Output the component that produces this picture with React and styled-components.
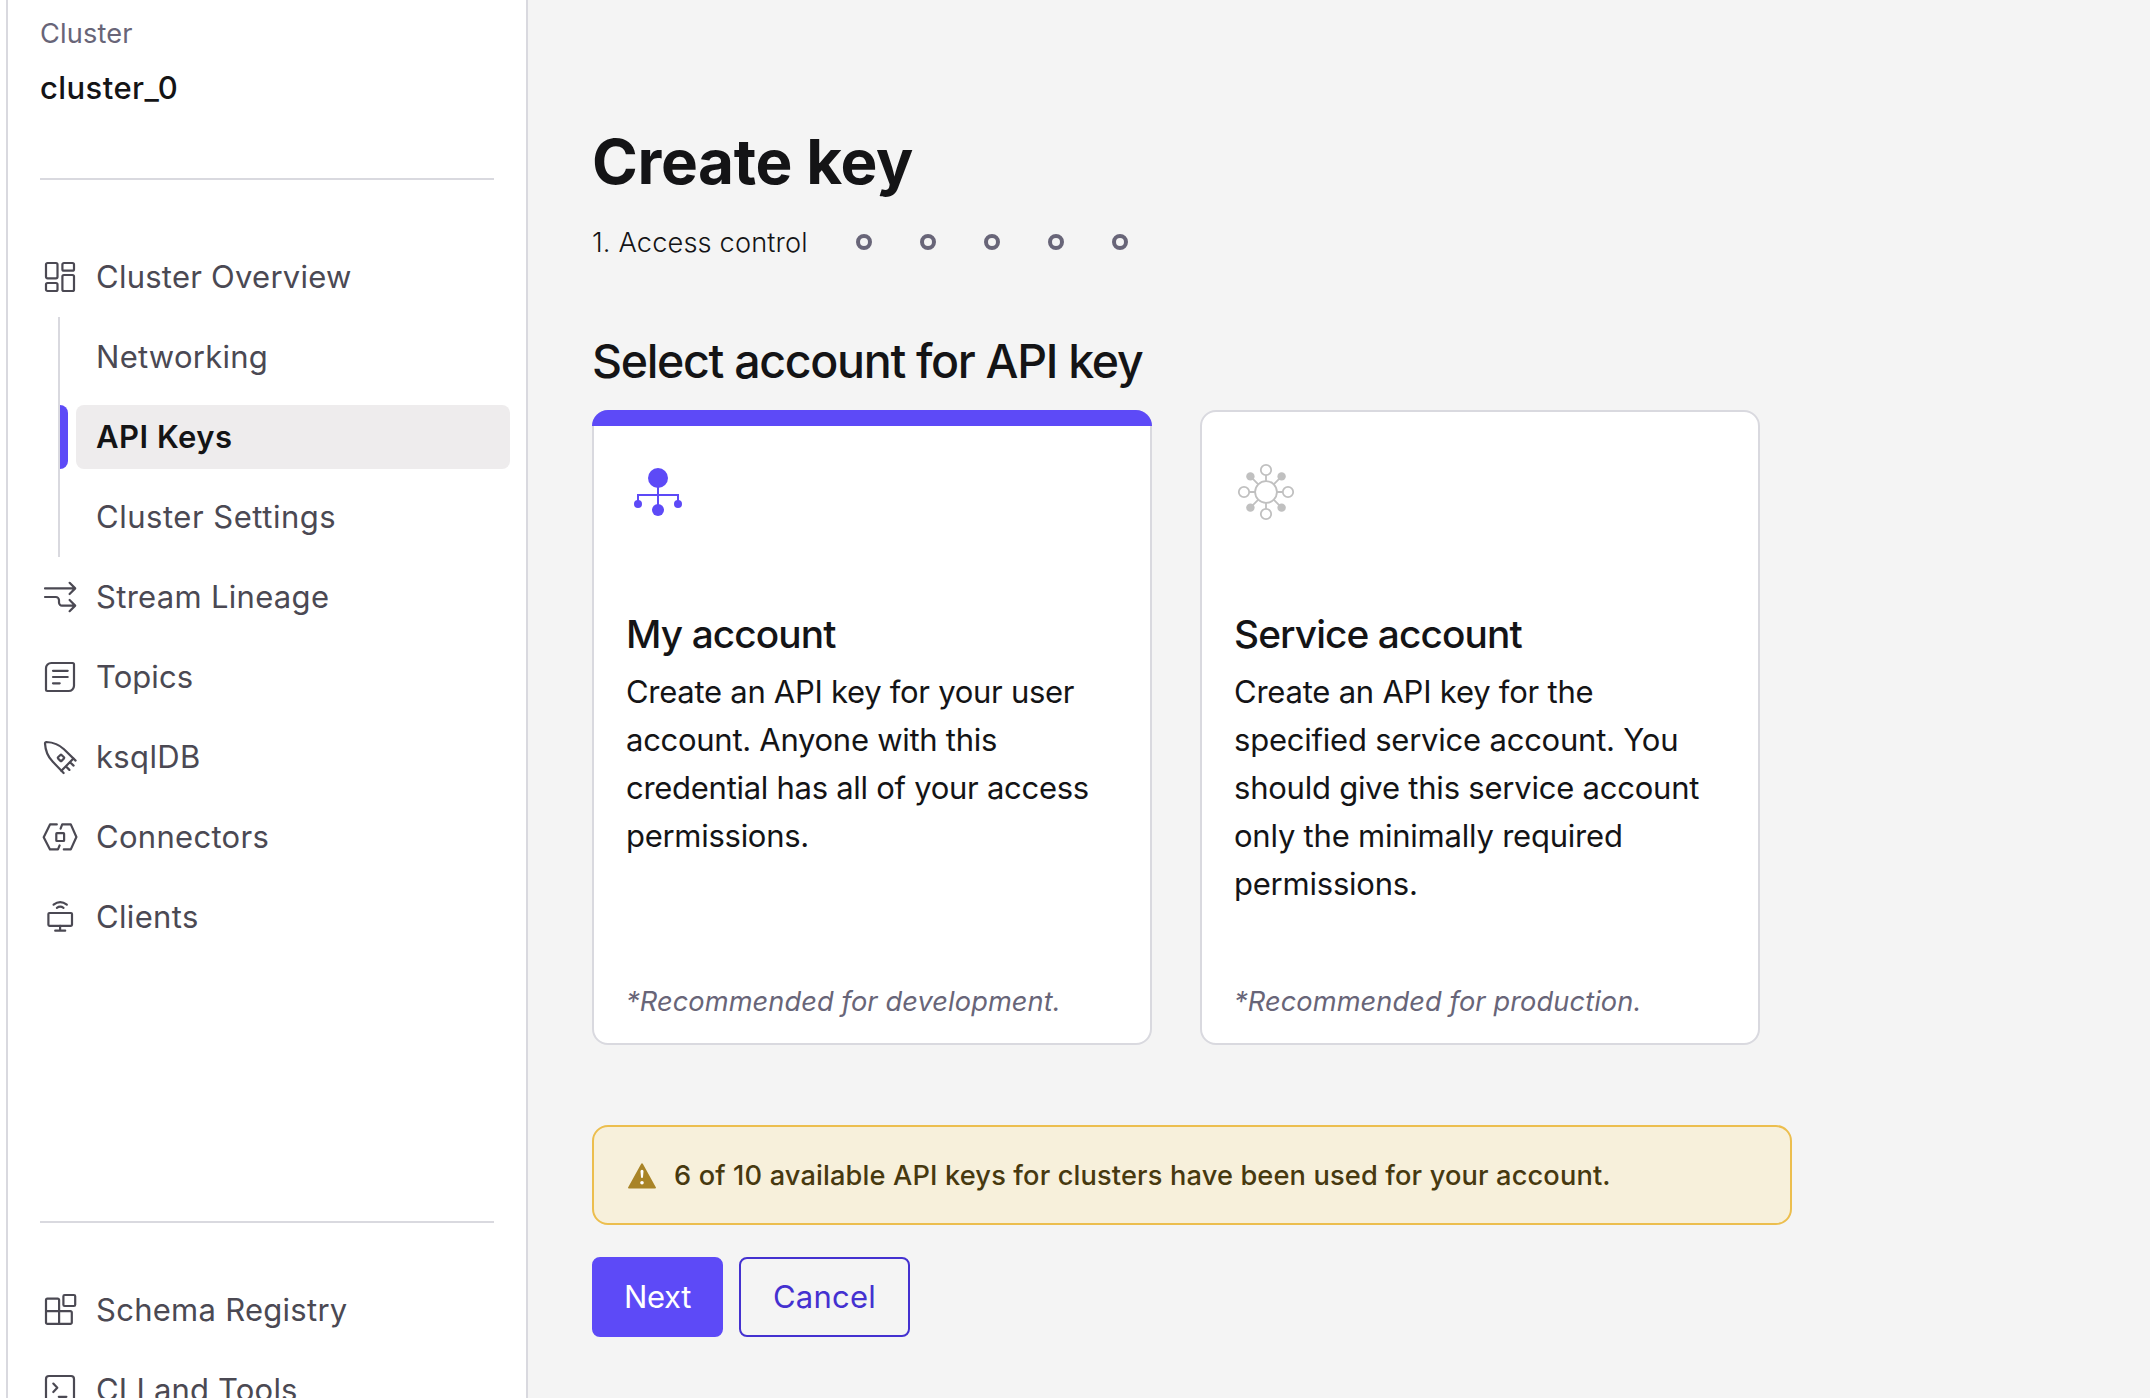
import React from "react";
import styled, { createGlobalStyle, css } from "styled-components";

const color = {
  ink: "#141416",
  nav: "#4b4953",
  muted: "#686578",
  line: "#d9d9df",
  canvas: "#f4f4f4",
  primary: "#5d4af7",
  primaryDark: "#4431d0",
};

const GlobalStyle = createGlobalStyle`
  *, *::before, *::after { box-sizing: border-box; }
  html, body { margin: 0; background: #fff; }
  body {
    font-family: Inter, "Liberation Sans", sans-serif;
    color: ${color.ink};
    overflow: hidden;
  }
  h1, h2, h3, p, ul { margin: 0; padding: 0; }
`;

const Page = styled.div`
  display: flex;
  height: 1398px;
  padding-left: 6px;
  overflow: hidden;
  background: #fff;
`;

/* Sidebar */

const Sidebar = styled.aside`
  flex: none;
  display: flex;
  flex-direction: column;
  width: 522px;
  border: solid ${color.line};
  border-width: 0 2px;
`;

const ClusterHeader = styled.header`
  flex: none;
  display: flex;
  flex-direction: column;
  height: 178px;
  margin: 0 32px;
  padding-top: 17px;
`;

const ClusterLabel = styled.span`
  font-size: 27.2px;
  line-height: 33px;
  letter-spacing: 0.15px;
  color: ${color.muted};
`;

const ClusterName = styled.span`
  margin-top: 18px;
  font-size: 31px;
  line-height: 40px;
  font-weight: 500;
  letter-spacing: 0.42px;
`;

const Divider = styled.hr`
  flex: none;
  width: 454px;
  height: 2px;
  margin: 0 0 0 32px;
  border: 0;
  background: ${color.line};
`;

const NavList = styled.nav`
  flex: none;
  display: flex;
  flex-direction: column;
  margin-top: ${(p) => p.$offset}px;
`;

const NavItem = styled.a`
  flex: none;
  display: flex;
  align-items: center;
  height: 80px;
  padding-left: 36px;
  font-size: 31px;
  line-height: 40px;
  letter-spacing: ${(p) => p.$tracking ?? 0.27}px;
  color: ${color.nav};
  white-space: nowrap;
`;

const NavIcon = styled.svg`
  flex: none;
  width: 32px;
  height: 32px;
  margin-right: 20px;
  overflow: visible;
  fill: none;
  stroke: currentColor;
  stroke-width: 2.2;
  stroke-linecap: round;
  stroke-linejoin: round;
`;

const SubNav = styled.div`
  display: flex;
  flex-direction: column;
  gap: 16px;
  height: 240px;
  margin-left: 50px;
  padding: 8px 0;
  border-left: 2px solid ${color.line};
`;

const SubNavItem = styled.a`
  display: flex;
  height: 64px;
  font-size: 31px;
  line-height: 64px;
  letter-spacing: ${(p) => p.$tracking ?? 0.27}px;
  color: ${color.nav};
  ${(p) =>
    p.$active &&
    css`
      color: ${color.ink};
      font-weight: 600;
    `}
`;

const ActiveBar = styled.span`
  width: 8px;
  border-radius: 0 8px 8px 0;
  background: ${(p) => (p.$active ? color.primary : "transparent")};
`;

const SubNavLabel = styled.span`
  width: 434px;
  margin-left: 8px;
  padding-left: 20px;
  border-radius: 8px;
  background: ${(p) => (p.$active ? "#eeeced" : "transparent")};
`;

/* Main */

const Main = styled.main`
  flex: 1;
  display: flex;
  flex-direction: column;
  padding: 122px 0 0 64px;
  background: ${color.canvas};
`;

const Title = styled.h1`
  font-size: 62px;
  line-height: 79px;
  font-weight: 700;
  letter-spacing: -0.36px;
`;

const Stepper = styled.div`
  display: flex;
  gap: 48px;
  height: 32px;
  margin-top: 25px;
`;

const StepLabel = styled.span`
  width: 216px;
  font-size: 27.2px;
  line-height: 33px;
  font-weight: 300;
  letter-spacing: 0.15px;
  white-space: nowrap;
`;

const StepDot = styled.span`
  width: 16px;
  height: 16px;
  margin-top: 8px;
  border: 4px solid ${color.muted};
  border-radius: 50%;
`;

const SectionTitle = styled.h2`
  margin-top: 73px;
  font-size: 46.5px;
  line-height: 60px;
  font-weight: 500;
  letter-spacing: -1.32px;
`;

const Cards = styled.div`
  display: flex;
  gap: 48px;
  margin-top: 19px;
`;

const Card = styled.section`
  position: relative;
  display: flex;
  flex-direction: column;
  width: 560px;
  height: 635px;
  padding: 48px 32px 25px;
  border: 2px solid ${color.line};
  border-radius: 16px;
  background: #fff;
  ${(p) =>
    p.$selected &&
    css`
      &::before {
        content: "";
        position: absolute;
        inset: -2px -2px auto;
        height: 16px;
        border-radius: 16px 16px 0 0;
        background: ${color.primary};
      }
    `}
`;

const CardIcon = styled.svg`
  display: block;
  width: 64px;
  height: 64px;
`;

const CardTitle = styled.h3`
  margin-top: 86px;
  font-size: 38.8px;
  line-height: 48px;
  font-weight: 500;
  letter-spacing: -0.9px;
`;

const CardText = styled.p`
  margin-top: 10px;
  font-size: 31px;
  line-height: 48px;
  letter-spacing: ${(p) => p.$tracking}px;
`;

const CardNote = styled.p`
  margin-top: auto;
  font-size: 27.2px;
  line-height: 32px;
  font-style: italic;
  letter-spacing: 0.1px;
  color: ${color.muted};
`;

const Alert = styled.div`
  display: flex;
  align-items: center;
  gap: 18px;
  width: 1200px;
  height: 100px;
  margin-top: 80px;
  padding: 1px 0 0 34px;
  border: 2px solid #ecbe4e;
  border-radius: 16px;
  background: #f7f0db;
  color: #47390f;
  font-size: 27.2px;
  line-height: 33px;
  font-weight: 500;
  letter-spacing: 0.15px;
  white-space: nowrap;
`;

const Actions = styled.div`
  display: flex;
  gap: 16px;
  margin-top: 32px;
`;

const Button = styled.button`
  width: ${(p) => p.$width}px;
  height: 80px;
  padding: 0;
  border: 2px solid ${(p) => (p.$primary ? color.primary : color.primaryDark)};
  border-radius: 8px;
  background: ${(p) => (p.$primary ? color.primary : "transparent")};
  color: ${(p) => (p.$primary ? "#fff" : color.primaryDark)};
  font: 400 31px/40px Inter, "Liberation Sans", sans-serif;
  letter-spacing: ${(p) => (p.$primary ? -0.4 : 0.25)}px;
`;

const OverviewIcon = () => (
  <NavIcon viewBox="0 0 32 32">
    <rect x="2" y="2" width="11.5" height="15.3" rx="1.5" />
    <rect x="18.4" y="2" width="11.6" height="7.7" rx="1.5" />
    <rect x="2" y="22" width="11.5" height="8" rx="1.5" />
    <rect x="18.4" y="14" width="11.6" height="16" rx="1.5" />
  </NavIcon>
);

const LineageIcon = () => (
  <NavIcon viewBox="0 0 32 32">
    <path d="M1 7.4H31M25.6 1.8 31.2 7.4 25.6 13" />
    <path d="M1 16H11.8a3.2 3.2 0 0 1 3.2 3.2v2.4a3 3 0 0 0 3 3H31M25.6 19 31.2 24.6 25.6 30.2" />
  </NavIcon>
);

const TopicsIcon = () => (
  <NavIcon viewBox="0 0 32 32">
    <path d="M7.3 2H28.6A1.4 1.4 0 0 1 30 3.4V24.7A5.3 5.3 0 0 1 24.7 30H3.4A1.4 1.4 0 0 1 2 28.6V7.3A5.3 5.3 0 0 1 7.3 2Z" />
    <path d="M9 9.8H23.7M9 16H23.7M9 22.3H15.7" />
  </NavIcon>
);

const KsqlIcon = () => (
  <NavIcon viewBox="0 0 32 32">
    <path d="M31.6 19.6 20 8.3C15 3.4 9.5 1.3 2.4 1 1.5 1 1 1.4 1 2.4 1.4 10 3.8 15.6 8.6 20.6L19.6 32" />
    <path d="M29.4 17.6 17.4 29.8M26 21.2 29.6 24.6M21.8 25.3 25.4 28.9" />
    <rect x="14.5" y="14.4" width="5" height="5" rx="0.8" transform="rotate(45 17 16.9)" />
  </NavIcon>
);

const ConnectorsIcon = () => (
  <NavIcon viewBox="0 0 32 32">
    <path d="M12.8 3.4H6L-.3 16.2 6 28.4H14L15.6 24.4" />
    <path d="M16.6 7.6 18.2 3.4H26.8L32.4 16 26.8 28.4H19.8" />
    <rect x="12.3" y="12.2" width="7.8" height="7.8" rx="0.6" />
  </NavIcon>
);

const ClientsIcon = () => (
  <NavIcon viewBox="0 0 32 32">
    <rect x="4.4" y="12" width="23.6" height="12.8" rx="1" />
    <path d="M16.1 24.8V29.6M11.2 29.7H21.2" />
    <path d="M9.6 3.7Q16.2-1.5 22.8 3.7M12.9 6.8Q16.2 4.4 19.5 6.8" />
  </NavIcon>
);

const SchemaIcon = () => (
  <NavIcon viewBox="0 0 32 32">
    <path d="M15.1 17.2V6A1.4 1.4 0 0 0 13.7 4.6H3.4A1.4 1.4 0 0 0 2 6V28.4A1.4 1.4 0 0 0 3.4 29.8H26.4A1.4 1.4 0 0 0 27.8 28.4V18.6A1.4 1.4 0 0 0 26.4 17.2H2M15.1 17.2V29.8" />
    <rect x="19.4" y="1" width="11.8" height="11" rx="1.3" />
  </NavIcon>
);

const TerminalIcon = () => (
  <NavIcon viewBox="0 0 32 32">
    <rect x="2" y="2" width="28" height="28" rx="3" />
    <path d="M9.3 9.6 13.3 13.8 9.3 18M14.8 22.8H22.4" />
  </NavIcon>
);

const UserAccountIcon = () => (
  <CardIcon viewBox="0 0 64 64" fill={color.primary}>
    <circle cx="32" cy="18" r="10" />
    <path d="M32 26V46M12 42V35H52V42" fill="none" stroke={color.primary} strokeWidth="2" />
    <circle cx="12" cy="44" r="4" />
    <circle cx="52" cy="44" r="4" />
    <circle cx="32" cy="50" r="6" />
  </CardIcon>
);

const ServiceAccountIcon = () => (
  <CardIcon viewBox="0 0 64 64" fill="none" stroke="#c0c0c0" strokeWidth="1.8">
    <circle cx="32" cy="32" r="10.9" />
    <circle cx="32" cy="10" r="5.2" />
    <circle cx="32" cy="54" r="5.2" />
    <circle cx="10" cy="32" r="5.2" />
    <circle cx="54" cy="32" r="5.2" />
    <path d="M32 15.2V21.1M32 42.9V48.8M15.2 32H21.1M42.9 32H48.8M16.4 16.4 24.3 24.3M47.6 16.4 39.7 24.3M16.4 47.6 24.3 39.7M47.6 47.6 39.7 39.7" />
    <g fill="#c0c0c0" stroke="none">
      <circle cx="16.4" cy="16.4" r="4.2" />
      <circle cx="47.6" cy="16.4" r="4.2" />
      <circle cx="16.4" cy="47.6" r="4.2" />
      <circle cx="47.6" cy="47.6" r="4.2" />
    </g>
  </CardIcon>
);

const WarningIcon = () => (
  <svg width="28" height="26" viewBox="0 0 28 26">
    <path d="M13.2.8a.9.9 0 0 1 1.6 0L27.8 24.2a.9.9 0 0 1-.8 1.3H1a.9.9 0 0 1-.8-1.3Z" fill="#a98427" />
    <path d="M12.5 8.2a1.5 1.5 0 0 1 3 0L15 14a1 1 0 0 1-2 0Z" fill="#fff" />
    <circle cx="14" cy="19.8" r="1.8" fill="#fff" />
  </svg>
);

const resources = [
  { label: "Stream Lineage", Icon: LineageIcon, tracking: 0.3 },
  { label: "Topics", Icon: TopicsIcon, tracking: 0.06 },
  { label: "ksqlDB", Icon: KsqlIcon, tracking: 0.35 },
  { label: "Connectors", Icon: ConnectorsIcon, tracking: 0.3 },
  { label: "Clients", Icon: ClientsIcon, tracking: 0.34 },
];

const subPages = [
  { label: "Networking" },
  { label: "API Keys", active: true, tracking: 0.5 },
  { label: "Cluster Settings", tracking: 0.52 },
];

const tools = [
  { label: "Schema Registry", Icon: SchemaIcon },
  { label: "CLI and Tools", Icon: TerminalIcon, tracking: 0.18 },
];

const NavEntry = ({ label, Icon, tracking }) => (
  <NavItem $tracking={tracking}>
    <Icon />
    {label}
  </NavItem>
);

export default function App() {
  return (
    <>
      <GlobalStyle />
      <Page>
        <Sidebar>
          <ClusterHeader>
            <ClusterLabel>Cluster</ClusterLabel>
            <ClusterName>cluster_0</ClusterName>
          </ClusterHeader>
          <Divider />
          <NavList $offset={57}>
            <NavEntry label="Cluster Overview" Icon={OverviewIcon} tracking={0.24} />
            <SubNav>
              {subPages.map(({ label, active, tracking }) => (
                <SubNavItem key={label} $active={active} $tracking={tracking}>
                  <ActiveBar $active={active} />
                  <SubNavLabel $active={active}>{label}</SubNavLabel>
                </SubNavItem>
              ))}
            </SubNav>
            {resources.map((item) => (
              <NavEntry key={item.label} {...item} />
            ))}
          </NavList>
          <NavList $offset={264}>
            <Divider />
          </NavList>
          <NavList $offset={47}>
            {tools.map((item) => (
              <NavEntry key={item.label} {...item} />
            ))}
          </NavList>
        </Sidebar>
        <Main>
          <Title>Create key</Title>
          <Stepper>
            <StepLabel>1. Access control</StepLabel>
            {[2, 3, 4, 5, 6].map((step) => (
              <StepDot key={step} />
            ))}
          </Stepper>
          <SectionTitle>Select account for API key</SectionTitle>
          <Cards>
            <Card $selected>
              <UserAccountIcon />
              <CardTitle>My account</CardTitle>
              <CardText $tracking={-0.28}>
                Create an API key for your user account. Anyone with this credential has all of your access
                permissions.
              </CardText>
              <CardNote>*Recommended for development.</CardNote>
            </Card>
            <Card>
              <ServiceAccountIcon />
              <CardTitle>Service account</CardTitle>
              <CardText $tracking={-0.22}>
                Create an API key for the specified service account. You should give this service account only the
                minimally required permissions.
              </CardText>
              <CardNote>*Recommended for production.</CardNote>
            </Card>
          </Cards>
          <Alert>
            <WarningIcon />
            6 of 10 available API keys for clusters have been used for your account.
          </Alert>
          <Actions>
            <Button $primary $width={131}>
              Next
            </Button>
            <Button $width={171}>Cancel</Button>
          </Actions>
        </Main>
      </Page>
    </>
  );
}
